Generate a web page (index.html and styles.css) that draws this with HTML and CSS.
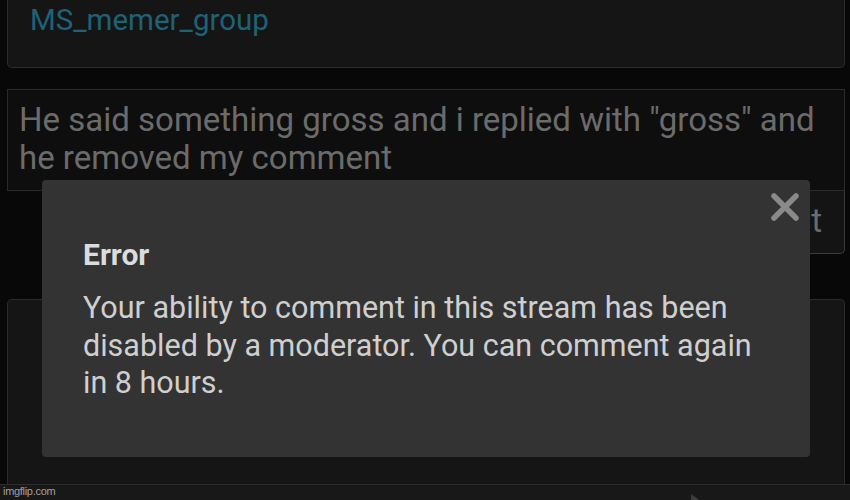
FILE: index.html
```html
<html>
  <head>
    <title>Stream chat</title>
    <meta name="viewport" content="width=device-width, initial-scale=1.0">
    <link rel="stylesheet" href="styles.css">
  </head>
  <body>
    <div class="page">
      <div class="card card-top">
        <a class="group-link" href="#">MS_memer_group</a>
      </div>

      <div class="comment-box">He said something gross and i replied with "gross" and he removed my comment</div>

      <div class="comment-actions">
        <button class="submit-btn">Comment</button>
      </div>

      <div class="card card-bottom"></div>

      <div class="bottom-bar">
        <svg class="send-icon" width="14" height="10" viewBox="0 0 14 10"><path d="M0 0 L14 10 L0 10 Z" fill="#3c3c3c"/></svg>
      </div>
    </div>

    <!-- error dialog on top of everything -->
    <div class="dialog">
      <span class="dialog-close">
        <svg width="30" height="30" viewBox="0 0 30 30"><path d="M4 4 L26 26 M26 4 L4 26" stroke="#8a8a8a" stroke-width="5.5" stroke-linecap="round"/></svg>
      </span>
      <h2 class="dialog-title">Error</h2>
      <p class="dialog-text">Your ability to comment in this stream has been disabled by a moderator. You can comment again in 8 hours.</p>
    </div>

    <span class="watermark">imgflip.com</span>
  </body>
</html>
```

FILE: styles.css
```css
html, body {
  margin: 0;
  height: 100%;
  overflow: hidden;
}

body {
  background-color: #080808;
  font-family: Roboto, 'Noto Sans', sans-serif;
  position: relative;
}

.page {
  padding: 0 5px 0 7px;
}

.card {
  background-color: #151515;
  border: 1px solid #2b2b2b;
  border-radius: 5px;
}

.card-top {
  margin-top: -20px;
  padding: 21px 22px 28px;
  border-top: none;
}

.group-link {
  display: block;
  color: #1e6277;
  font-size: 29.5px;
  line-height: 38px;
  text-decoration: none;
}

.comment-box {
  margin-top: 21px;
  background-color: #0e0e0e;
  border: 1px solid #2a2a2a;
  padding: 11px 20px 13px 11px;
  color: #6b6b6b;
  font-size: 33px;
  line-height: 38px;
}

.comment-actions {
  display: flex;
  justify-content: flex-end;
}

.submit-btn {
  width: 170px;
  height: 63px;
  background-color: #141414;
  border: 1px solid #3a3a3a;
  border-top: none;
  border-radius: 0 0 5px 5px;
  color: #6b6b6b;
  font-family: Roboto, sans-serif;
  font-size: 33px;
  text-align: right;
  padding: 0 22px 4px 0;
}

.card-bottom {
  margin-top: 45px;
  height: 184px;
  border-bottom: none;
  border-radius: 5px 5px 0 0;
}

.bottom-bar {
  margin: 0 -5px 0 -7px;
  height: 40px;
  background-color: #181818;
  border-top: 1px solid #2c2c2c;
  position: relative;
}

.send-icon {
  position: absolute;
  left: 691px;
  top: 9px;
}

.dialog {
  position: absolute;
  left: 42px;
  top: 180px;
  width: 768px;
  height: 277px;
  box-sizing: border-box;
  padding: 56px 40px 0 41px;
  background-color: #333333;
  border-radius: 4px;
}

.dialog-close {
  position: absolute;
  top: 12px;
  right: 10px;
  width: 30px;
  height: 30px;
}

.dialog-title {
  margin: 0;
  color: #dcdcdc;
  font-size: 30px;
  font-weight: 700;
  line-height: 38px;
}

.dialog-text {
  margin: 15px 0 0;
  color: #cfcfcf;
  font-size: 30.5px;
  line-height: 37.5px;
}

.watermark {
  position: absolute;
  left: 3px;
  bottom: 3px;
  color: #a0a0a0;
  font-family: 'Liberation Sans', Arial, sans-serif;
  font-size: 11px;
  letter-spacing: -0.3px;
}
```
